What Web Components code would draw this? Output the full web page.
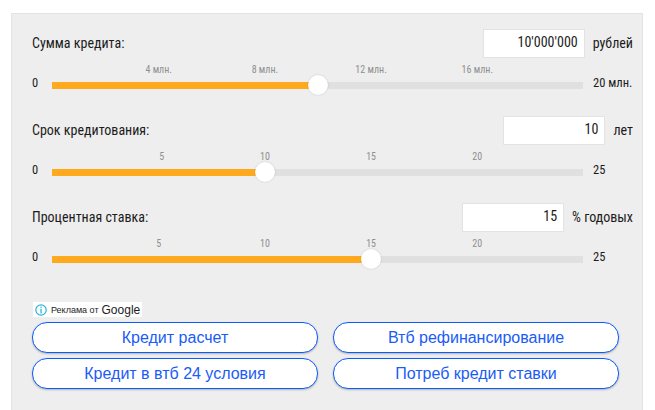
<!DOCTYPE html>
<html lang="ru">
<head>
<meta charset="utf-8">
<title>Кредитный калькулятор</title>
<style>
  html, body { margin: 0; height: 410px; overflow: hidden; background: #fff; }
  body { font-family: "Roboto", "Liberation Sans", sans-serif; }
</style>
</head>
<body>

<credit-panel>
  <loan-field label="Сумма кредита:" value="10'000'000" unit="рублей" min="0" max="20 млн." percent="50" ticks="4 млн.,8 млн.,12 млн.,16 млн." step="20"></loan-field>
  <loan-field label="Срок кредитования:" value="10" unit="лет" min="0" max="25" percent="40" ticks="5,10,15,20" step="20" first-shift="3"></loan-field>
  <loan-field label="Процентная ставка:" value="15" unit="% годовых" min="0" max="25" percent="60" ticks="5,10,15,20" step="20"></loan-field>
  <ad-block slot="ads">
    <ad-link>Кредит расчет</ad-link>
    <ad-link>Втб рефинансирование</ad-link>
    <ad-link>Кредит в втб 24 условия</ad-link>
    <ad-link>Потреб кредит ставки</ad-link>
  </ad-block>
</credit-panel>

<script>
class CreditPanel extends HTMLElement {
  constructor() {
    super();
    this.attachShadow({mode: 'open'}).innerHTML = `
      <style>
        :host {
          display: block;
          box-sizing: border-box;
          width: 632px;
          margin: 13px 0 0 11px;
          padding: 15px 9px 30px 20px;
          background: #eee;
          border: 1px solid #e3e3e3;
          border-bottom: 0;
        }
        .fields { display: flex; flex-direction: column; gap: 27px; }
        .ads { display: block; margin-top: 39px; }
      </style>
      <div class="fields"><slot></slot></div>
      <div class="ads"><slot name="ads"></slot></div>
    `;
  }
}

class LoanField extends HTMLElement {
  constructor() {
    super();
    this.attachShadow({mode: 'open'});
  }

  connectedCallback() {
    const attr = name => this.getAttribute(name);
    const step = +attr('step');
    const shift = +attr('first-shift') || 0;
    const ticks = attr('ticks').split(',').map((t, i) =>
      `<span class="tick" style="left:calc(${step * (i + 1)}% + ${i ? 0.5 : 0.5 + shift}px)">${t}</span>`).join('');
    this.shadowRoot.innerHTML = `
      <style>
        :host { display: block; font-size: 14px; color: #1c1c1c; font-stretch: 75%; }
        .top { display: flex; align-items: center; height: 29px; }
        .label { flex: 1; padding-bottom: 2px; }
        .box {
          box-sizing: border-box;
          width: 102px;
          height: 29px;
          padding-right: 6px;
          background: #fff;
          border: 1px solid #e3e3e3;
          text-align: right;
          line-height: 25px;
        }
        .unit { margin-left: 8px; padding-bottom: 2px; white-space: nowrap; }
        .bottom {
          display: grid;
          grid-template-columns: 20px 531px 50px;
          grid-template-rows: 7px;
          align-items: center;
          margin-top: 24px;
        }
        .min, .max { font-size: 12.5px; padding-bottom: 6px; }
        .max { padding-left: 10px; white-space: nowrap; }
        .track { position: relative; height: 7px; background: #e0e0e0; }
        .fill { height: 7px; background: #ffa91f; }
        .thumb {
          position: absolute;
          top: -7px;
          width: 20px;
          height: 20px;
          margin-left: -9.5px;
          border-radius: 50%;
          background: #fff;
          box-shadow: 0 0 2px rgba(0,0,0,.18);
        }
        .tick {
          position: absolute;
          top: -19px;
          transform: translateX(-50%);
          font-size: 10px;
          line-height: 14px;
          color: #8f8f8f;
          white-space: nowrap;
        }
      </style>
      <div class="top">
        <div class="label">${attr('label')}</div>
        <div class="box">${attr('value')}</div>
        <div class="unit">${attr('unit')}</div>
      </div>
      <div class="bottom">
        <div class="min">${attr('min')}</div>
        <div class="track">
          <div class="fill" style="width:${attr('percent')}%"></div>
          ${ticks}
          <div class="thumb" style="left:${attr('percent')}%"></div>
        </div>
        <div class="max">${attr('max')}</div>
      </div>
    `;
  }
}

class AdBlock extends HTMLElement {
  constructor() {
    super();
    this.attachShadow({mode: 'open'}).innerHTML = `
      <style>
        :host { display: block; width: 587px; }
        .badge {
          display: flex;
          align-items: center;
          box-sizing: border-box;
          width: 109px;
          height: 15px;
          margin-left: 1px;
          padding-left: 2px;
          background: #fff;
          color: #1c1c1c;
          font: 9px "Liberation Sans", Arial, sans-serif;
        }
        .badge svg { width: 12px; height: 12px; margin-right: 4px; flex: none; }
        .badge b { font-weight: 400; font-size: 12px; margin-left: 3px; }
        .grid {
          display: grid;
          grid-template-columns: 286px 286px;
          column-gap: 15px;
          row-gap: 5px;
          margin-top: 5px;
        }
      </style>
      <div class="badge">
        <svg viewBox="0 0 12 12"><circle cx="6" cy="6" r="5.2" fill="none" stroke="#2bb5d8" stroke-width="1.2"/><rect x="5.4" y="2.6" width="1.3" height="1.3" fill="#2bb5d8"/><rect x="5.4" y="4.8" width="1.3" height="4.6" fill="#2bb5d8"/></svg>
        <span>Реклама от</span><b>Google</b>
      </div>
      <div class="grid"><slot></slot></div>
    `;
  }
}

class AdLink extends HTMLElement {
  constructor() {
    super();
    this.attachShadow({mode: 'open'}).innerHTML = `
      <style>
        :host {
          display: flex;
          align-items: center;
          justify-content: center;
          box-sizing: border-box;
          height: 31px;
          background: #fff;
          border: 1px solid #0b5cff;
          border-radius: 15px;
          box-shadow: 0 1px 2px rgba(0,0,0,.25);
          color: #1a5cf5;
          font: 16px "Liberation Sans", Arial, sans-serif;
        }
      </style>
      <slot></slot>
    `;
  }
}

customElements.define('credit-panel', CreditPanel);
customElements.define('loan-field', LoanField);
customElements.define('ad-block', AdBlock);
customElements.define('ad-link', AdLink);
</script>
</body>
</html>
